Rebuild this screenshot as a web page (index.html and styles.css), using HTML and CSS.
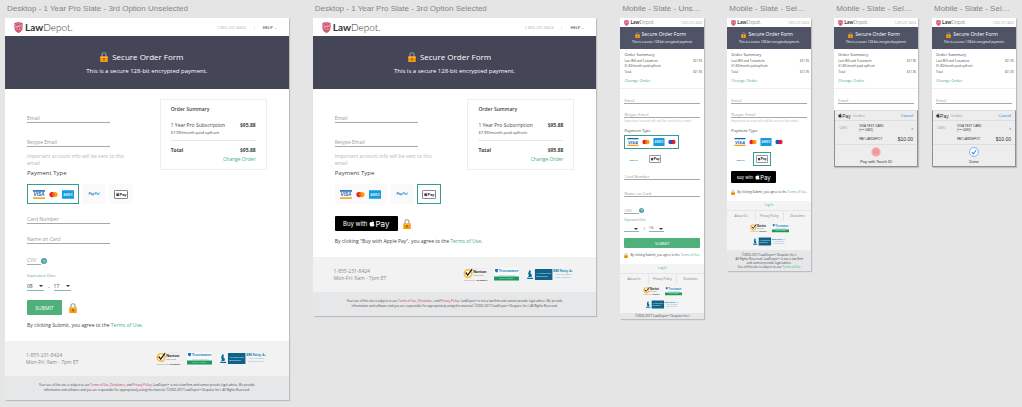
FILE: index.html
```html
<!DOCTYPE html>
<html lang="en">
<head>
    <meta charset="UTF-8">
    <meta name="viewport" content="width=device-width, initial-scale=1.0">
    <title>LawDepot - Secure Order Form</title>
    <link rel="stylesheet" href="styles.css">
</head>
<body>
    <!-- Shared icons -->
    <svg class="sprite" aria-hidden="true">
        <symbol id="shield" viewBox="0 0 18 22">
            <path d="M1 2 Q9 -1 17 2 V12 Q17 18 9 22 Q1 18 1 12 Z" fill="#c8375a"/>
            <path d="M3 4 Q9 1.500 15 4 V12 Q15 16.500 9 19.500 Q3 16.500 3 12 Z" fill="none" stroke="#f0b8c6" stroke-width="1"/>
            <path d="M6 5 L6 14 M6 14 Q9 17 13 14 M9 5 Q14 6 12 11 M8 8 L12 14 M4 10 L14 7" fill="none" stroke="#fff" stroke-width="1"/>
        </symbol>
        <symbol id="lock" viewBox="0 0 16 20">
            <path d="M4 10 V5.500 Q4 1.500 8 1.500 Q12 1.500 12 5.500 V10" fill="none" stroke="#8d9c9f" stroke-width="2.200"/>
            <rect x="0.500" y="9" width="15" height="11" rx="1" fill="#f79a0c"/>
            <path d="M0.500 9 H15.500 V12 H0.500 Z" fill="#ffb02e"/>
            <circle cx="8" cy="13.500" r="1.700" fill="#8a5200"/>
            <path d="M7.300 14 H8.700 V17.500 H7.300 Z" fill="#8a5200"/>
        </symbol>
        <symbol id="visa" viewBox="0 0 36 26">
            <path d="M0 0 H36 V5 H0 Z" fill="#1565b5"/>
            <path d="M0 21 H36 V26 H0 Z" fill="#f5a11c"/>
            <path d="M0 5 H36 V21 H0 Z" fill="#fff"/>
            <text x="18" y="19" text-anchor="middle" font-family="Liberation Sans, sans-serif" font-size="14" font-weight="bold" font-style="italic" fill="#1565b5">VISA</text>
        </symbol>
        <symbol id="mastercard" viewBox="0 0 24 18">
            <circle cx="8" cy="9" r="7" fill="#ea1d25"/>
            <circle cx="16" cy="9" r="7" fill="#f79e1b"/>
            <path d="M12 3.300 A7 7 0 0 1 12 14.700 A7 7 0 0 1 12 3.300 Z" fill="#ff5f00"/>
        </symbol>
        <symbol id="maestro" viewBox="0 0 24 18">
            <circle cx="8" cy="9" r="7" fill="#1a52c4"/>
            <circle cx="16" cy="9" r="7" fill="#e5202c"/>
            <path d="M12 3.300 A7 7 0 0 1 12 14.700 A7 7 0 0 1 12 3.300 Z" fill="#7a2f86"/>
        </symbol>
        <symbol id="amex" viewBox="0 0 36 26">
            <rect width="36" height="26" rx="1" fill="#179be0"/>
            <text x="18" y="17" text-anchor="middle" font-family="Liberation Sans, sans-serif" font-size="10" font-weight="bold" fill="#d5effc">AMEX</text>
        </symbol>
        <symbol id="paypal" viewBox="0 0 36 12">
            <text x="18" y="10" text-anchor="middle" font-family="Liberation Sans, sans-serif" font-size="10" font-weight="bold" font-style="italic" fill="#169bd7"><tspan fill="#1b6fbc">Pay</tspan>Pal</text>
        </symbol>
        <symbol id="apple" viewBox="0 0 20 24">
            <path d="M13.500 1 Q13.500 5 10 5.800 Q10 2 13.500 1 Z M10 7.500 Q12 6 14.500 6.200 Q17 6.400 18 8.200 Q15.500 10 15.700 12.500 Q16 15.500 18.700 16.600 Q17.500 20 15.300 21.800 Q14 22.800 12.200 22 Q10.200 21.200 8.300 22 Q6.500 23 5 21.500 Q1.500 18 1.500 12.500 Q2 7.200 6 6.500 Q8 6.400 10 7.500 Z" fill="currentColor"/>
        </symbol>
        <symbol id="applepay" viewBox="0 0 40 26">
            <rect x="1" y="1" width="38" height="24" rx="3" fill="#fff" stroke="#222" stroke-width="1.800"/>
            <use href="#apple" x="5" y="6" width="11" height="13"/>
            <text x="16" y="18" font-family="Liberation Sans, sans-serif" font-size="11" font-weight="bold" fill="#111">Pay</text>
        </symbol>
        <symbol id="norton" viewBox="0 0 74 38">
            <circle cx="15" cy="16" r="11" fill="#fff" stroke="#fdbb30" stroke-width="5"/>
            <path d="M8 13 L14 21 L27 3" fill="none" stroke="#222" stroke-width="4"/>
            <rect x="28" y="2" width="44" height="1" fill="#d5d5d5"/>
            <text x="30" y="15" font-family="Liberation Sans, sans-serif" font-size="12" font-weight="bold" fill="#222">Norton</text>
            <text x="31" y="24" font-family="Liberation Sans, sans-serif" font-size="6" fill="#888">SECURED</text>
            <text x="2" y="37" font-family="Liberation Sans, sans-serif" font-size="7" fill="#888">powered by <tspan font-weight="bold" fill="#444">Symantec</tspan></text>
        </symbol>
        <symbol id="truste" viewBox="0 0 74 38">
            <rect width="74" height="25" fill="#f7fafc"/>
            <path d="M3 3 H12 V7 Q12 11 8 13 Q3 11 3 7 Z" fill="#1b75bb"/>
            <text x="14" y="13" font-family="Liberation Sans, sans-serif" font-size="12" font-weight="bold" fill="#2a86bb">Trustwave</text>
            <text x="14" y="22" font-family="Liberation Sans, sans-serif" font-size="6" fill="#82b79a">Trusted Commerce</text>
            <rect y="25" width="74" height="12" rx="1" fill="#1d9a5f"/>
            <text x="37" y="33" text-anchor="middle" font-family="Liberation Sans, sans-serif" font-size="6" fill="#c5ecd7">Click to Validate</text>
        </symbol>
        <symbol id="bbb" viewBox="0 0 148 34">
            <path d="M0 1 H27 V33 H0 Z" fill="#eef4f7"/>
            <path d="M13 2 Q19 8 15 13 Q22 18 18 25 H8 Q12 20 8 15 Q8 10 13 2 Z M5 27 H23 V31 H5 Z" fill="#0f6a92"/>
            <rect x="29" y="0" width="54" height="34" rx="1" fill="#0f6288"/>
            <text x="33" y="15" font-family="Liberation Sans, sans-serif" font-size="7" font-weight="bold" fill="#b6d9e8">ACCREDITED</text>
            <text x="33" y="25" font-family="Liberation Sans, sans-serif" font-size="7" font-weight="bold" fill="#b6d9e8">BUSINESS</text>
            <text x="86" y="9" font-family="Liberation Sans, sans-serif" font-size="8" font-weight="bold" fill="#1382ad">BBB Rating: A+</text>
            <text x="92" y="19" font-family="Liberation Sans, sans-serif" font-size="7" fill="#58a6c4">As of 6/14/2017</text>
            <text x="92" y="29" font-family="Liberation Sans, sans-serif" font-size="7" fill="#58a6c4">Click for Profile</text>
        </symbol>
        <symbol id="help" viewBox="0 0 18 18">
            <circle cx="9" cy="9" r="9" fill="#4f9ea2"/>
            <text x="9" y="14" text-anchor="middle" font-family="Liberation Sans, sans-serif" font-size="13" font-weight="bold" fill="#d8eeee">?</text>
        </symbol>
    </svg>

    <div class="canvas">
        <section class="artboard desktop">
            <h2 class="artboard-name">Desktop - 1 Year Pro Slate - 3rd Option Unselected</h2>
            <div class="page">
                <header class="topbar">
                    <div class="logo"><svg class="shield"><use href="#shield"/></svg><b>Law</b>Depot.</div>
                    <div class="contact"><span class="phone">1-855-231-8424</span><button class="help-btn">HELP <span class="caret">⌄</span></button></div>
                </header>
                <div class="hero">
                    <h1><svg class="lock"><use href="#lock"/></svg>Secure Order Form</h1>
                    <p>This is a secure 128-bit encrypted payment.</p>
                </div>
                <main class="content">
                    <form class="order-form">
                        <input class="field" type="email" placeholder="Email" aria-label="Email">
                        <input class="field retype" type="email" placeholder="Retype Email" aria-label="Retype Email">
                        <p class="note">Important account info will be sent to this email</p>
                        <h3 class="payment-title">Payment Type</h3>
                        <div class="options">
                            <label class="option cards"><input type="radio" name="pay1" aria-label="Credit card" checked><svg class="card"><use href="#visa"/></svg><svg class="mc"><use href="#mastercard"/></svg><svg class="card"><use href="#amex"/></svg></label>
                            <label class="option"><input type="radio" name="pay1" aria-label="PayPal"><svg class="paypal"><use href="#paypal"/></svg></label>
                            <label class="option"><input type="radio" name="pay1" aria-label="Apple Pay"><svg class="applepay"><use href="#applepay"/></svg></label>
                        </div>
                        <input class="field card-number" type="text" placeholder="Card Number" aria-label="Card Number">
                        <input class="field card-name" type="text" placeholder="Name on Card" aria-label="Name on Card">
                        <div class="cvv-row"><input class="field cvv" type="text" placeholder="CVV" aria-label="CVV"><svg class="help"><use href="#help"/></svg></div>
                        <div class="exp-label">Expiration Date</div>
                        <div class="exp-row">
                            <div class="select-wrap"><select class="select" aria-label="Expiration month"><option>08</option></select></div>
                            <span>-</span>
                            <div class="select-wrap"><select class="select" aria-label="Expiration year"><option>17</option></select></div>
                        </div>
                        <div class="submit-row"><button class="submit" type="button">SUBMIT</button><svg class="lock"><use href="#lock"/></svg></div>
                        <p class="agree">By clicking Submit, you agree to the <a href="#">Terms of Use</a>.</p>
                    </form>
                    <aside class="summary">
                        <h3>Order Summary</h3>
                        <div class="line item"><span>1 Year Pro Subscription</span><b>$95.88</b></div>
                        <p class="small">$7.99/month paid upfront</p>
                        <div class="line total"><b>Total</b><b>$95.88</b></div>
                        <a class="change" href="#">Change Order</a>
                    </aside>
                </main>
                <footer class="footer">
                    <p>1-855-231-8424<br>Mon-Fri: 9am - 7pm ET</p>
                    <div class="badges"><svg class="norton"><use href="#norton"/></svg><svg class="truste"><use href="#truste"/></svg><svg class="bbb"><use href="#bbb"/></svg></div>
                </footer>
                <p class="legal">Your use of this site is subject to our <a href="#">Terms of Use, Disclaimer</a>, and <a href="#">Privacy Policy</a>. LawDepot™ is not a law firm and cannot provide legal advice. We provide<br>information and software and you are responsible for appropriately using this material. ©2002-2017 LawDepot™ (Sequiter Inc.). All Rights Reserved.</p>
            </div>
        </section>

        <section class="artboard desktop">
            <h2 class="artboard-name">Desktop - 1 Year Pro Slate - 3rd Option Selected</h2>
            <div class="page">
                <header class="topbar">
                    <div class="logo"><svg class="shield"><use href="#shield"/></svg><b>Law</b>Depot.</div>
                    <div class="contact"><span class="phone">1-855-231-8424</span><button class="help-btn">HELP <span class="caret">⌄</span></button></div>
                </header>
                <div class="hero">
                    <h1><svg class="lock"><use href="#lock"/></svg>Secure Order Form</h1>
                    <p>This is a secure 128-bit encrypted payment.</p>
                </div>
                <main class="content">
                    <form class="order-form">
                        <input class="field" type="email" placeholder="Email" aria-label="Email">
                        <input class="field retype" type="email" placeholder="Retype Email" aria-label="Retype Email">
                        <p class="note">Important account info will be sent to this email</p>
                        <h3 class="payment-title">Payment Type</h3>
                        <div class="options">
                            <label class="option cards"><input type="radio" name="pay2" aria-label="Credit card"><svg class="card"><use href="#visa"/></svg><svg class="mc"><use href="#mastercard"/></svg><svg class="card"><use href="#amex"/></svg></label>
                            <label class="option"><input type="radio" name="pay2" aria-label="PayPal"><svg class="paypal"><use href="#paypal"/></svg></label>
                            <label class="option"><input type="radio" name="pay2" aria-label="Apple Pay" checked><svg class="applepay"><use href="#applepay"/></svg></label>
                        </div>
                        <div class="buy-row"><button class="buy" type="button">Buy with <svg class="apple"><use href="#apple"/></svg><span>Pay</span></button><svg class="lock"><use href="#lock"/></svg></div>
                        <p class="agree">By clicking "Buy with Apple Pay", you agree to the <a href="#">Terms of Use</a>.</p>
                    </form>
                    <aside class="summary">
                        <h3>Order Summary</h3>
                        <div class="line item"><span>1 Year Pro Subscription</span><b>$95.88</b></div>
                        <p class="small">$7.99/month paid upfront</p>
                        <div class="line total"><b>Total</b><b>$95.88</b></div>
                        <a class="change" href="#">Change Order</a>
                    </aside>
                </main>
                <footer class="footer">
                    <p>1-855-231-8424<br>Mon-Fri: 9am - 7pm ET</p>
                    <div class="badges"><svg class="norton"><use href="#norton"/></svg><svg class="truste"><use href="#truste"/></svg><svg class="bbb"><use href="#bbb"/></svg></div>
                </footer>
                <p class="legal">Your use of this site is subject to our <a href="#">Terms of Use, Disclaimer</a>, and <a href="#">Privacy Policy</a>. LawDepot™ is not a law firm and cannot provide legal advice. We provide<br>information and software and you are responsible for appropriately using this material. ©2002-2017 LawDepot™ (Sequiter Inc.). All Rights Reserved.</p>
            </div>
        </section>

        <section class="artboard mobile">
            <h2 class="artboard-name">Mobile - Slate - Unselected</h2>
            <div class="page">
                <header class="topbar">
                    <div class="logo"><svg class="shield"><use href="#shield"/></svg><b>Law</b>Depot.</div>
                    <span class="phone">1-855-231-8424</span>
                </header>
                <div class="hero">
                    <h1><svg class="lock"><use href="#lock"/></svg>Secure Order Form</h1>
                    <p>This is a secure 128-bit encrypted payment.</p>
                </div>
                <div class="m-summary">
                    <h3>Order Summary</h3>
                    <div class="line"><span>Last Will and Testament</span><span>$21.95</span></div>
                    <p class="small">$1.83/month paid upfront</p>
                    <div class="line total"><span>Total</span><span>$21.95</span></div>
                    <a class="change" href="#">Change Order</a>
                </div>
                <form class="order-form">
                    <input class="field" type="email" placeholder="Email" aria-label="Email">
                    <input class="field retype" type="email" placeholder="Retype Email" aria-label="Retype Email">
                    <p class="note">Important account info will be sent to this email</p>
                    <h3 class="payment-title">Payment Type</h3>
                    <div class="options">
                        <label class="option cards"><input type="radio" name="pay3" aria-label="Credit card" checked><svg class="card"><use href="#visa"/></svg><svg class="mc"><use href="#mastercard"/></svg><svg class="card"><use href="#amex"/></svg><svg class="mc"><use href="#maestro"/></svg></label>
                        <label class="option"><input type="radio" name="pay3" aria-label="PayPal"><svg class="paypal"><use href="#paypal"/></svg></label>
                        <label class="option"><input type="radio" name="pay3" aria-label="Apple Pay"><svg class="applepay"><use href="#applepay"/></svg></label>
                    </div>
                    <input class="field card-number" type="text" placeholder="Card Number" aria-label="Card Number">
                    <input class="field card-name" type="text" placeholder="Name on Card" aria-label="Name on Card">
                    <div class="cvv-row"><input class="field cvv" type="text" placeholder="CVV" aria-label="CVV"><svg class="help"><use href="#help"/></svg></div>
                    <div class="exp-label">Expiration Date</div>
                    <div class="exp-row">
                        <div class="select-wrap"><select class="select" aria-label="Expiration month"><option></option></select></div>
                        <span>/</span>
                        <div class="select-wrap"><select class="select" aria-label="Expiration year"><option>16</option></select></div>
                    </div>
                    <button class="submit" type="button">SUBMIT</button>
                    <p class="agree"><svg class="lock"><use href="#lock"/></svg>By clicking Submit, you agree to the <a href="#">Terms of Use</a>.</p>
                </form>
                <footer class="m-footer">
                    <a class="login" href="#">Log In</a>
                    <nav><a href="#">About Us</a><a href="#">Privacy Policy</a><a href="#">Disclaimer</a></nav>
                    <div class="badges"><svg class="norton"><use href="#norton"/></svg><svg class="truste"><use href="#truste"/></svg><svg class="bbb"><use href="#bbb"/></svg></div>
                </footer>
                <p class="legal">©2002-2017 LawDepot™ (Sequiter Inc.)</p>
            </div>
        </section>

        <section class="artboard mobile">
            <h2 class="artboard-name">Mobile - Slate - Selected</h2>
            <div class="page">
                <header class="topbar">
                    <div class="logo"><svg class="shield"><use href="#shield"/></svg><b>Law</b>Depot.</div>
                    <span class="phone">1-855-231-8424</span>
                </header>
                <div class="hero">
                    <h1><svg class="lock"><use href="#lock"/></svg>Secure Order Form</h1>
                    <p>This is a secure 128-bit encrypted payment.</p>
                </div>
                <div class="m-summary">
                    <h3>Order Summary</h3>
                    <div class="line"><span>Last Will and Testament</span><span>$21.95</span></div>
                    <p class="small">$1.83/month paid upfront</p>
                    <div class="line total"><span>Total</span><span>$21.95</span></div>
                    <a class="change" href="#">Change Order</a>
                </div>
                <form class="order-form">
                    <input class="field" type="email" placeholder="Email" aria-label="Email">
                    <input class="field retype" type="email" placeholder="Retype Email" aria-label="Retype Email">
                    <p class="note">Important account info will be sent to this email</p>
                    <h3 class="payment-title">Payment Type</h3>
                    <div class="options">
                        <label class="option cards"><input type="radio" name="pay4" aria-label="Credit card"><svg class="card"><use href="#visa"/></svg><svg class="mc"><use href="#mastercard"/></svg><svg class="card"><use href="#amex"/></svg><svg class="mc"><use href="#maestro"/></svg></label>
                        <label class="option"><input type="radio" name="pay4" aria-label="PayPal"><svg class="paypal"><use href="#paypal"/></svg></label>
                        <label class="option"><input type="radio" name="pay4" aria-label="Apple Pay" checked><svg class="applepay"><use href="#applepay"/></svg></label>
                    </div>
                    <button class="buy" type="button">Buy with <svg class="apple"><use href="#apple"/></svg><span>Pay</span></button>
                    <p class="agree"><svg class="lock"><use href="#lock"/></svg>By clicking Submit, you agree to the <a href="#">Terms of Use</a>.</p>
                </form>
                <footer class="m-footer">
                    <a class="login" href="#">Log In</a>
                    <nav><a href="#">About Us</a><a href="#">Privacy Policy</a><a href="#">Disclaimer</a></nav>
                    <div class="badges"><svg class="norton"><use href="#norton"/></svg><svg class="truste"><use href="#truste"/></svg><svg class="bbb"><use href="#bbb"/></svg></div>
                </footer>
                <p class="legal">©2002-2017 LawDepot™ (Sequiter Inc.).<br>All Rights Reserved. LawDepot™ is not a law firm<br>and cannot provide legal advice.<span>Use of this site is subject to our <a href="#">Terms of Use</a></span></p>
            </div>
        </section>

        <section class="artboard mobile narrow-gap">
            <h2 class="artboard-name">Mobile - Slate - Selected - Touch ID</h2>
            <div class="page">
                <header class="topbar">
                    <div class="logo"><svg class="shield"><use href="#shield"/></svg><b>Law</b>Depot.</div>
                    <span class="phone">1-855-231-8424</span>
                </header>
                <div class="hero">
                    <h1><svg class="lock"><use href="#lock"/></svg>Secure Order Form</h1>
                    <p>This is a secure 128-bit encrypted payment.</p>
                </div>
                <div class="m-summary">
                    <h3>Order Summary</h3>
                    <div class="line"><span>Last Will and Testament</span><span>$21.95</span></div>
                    <p class="small">$1.83/month paid upfront</p>
                    <div class="line total"><span>Total</span><span>$21.95</span></div>
                    <a class="change" href="#">Change Order</a>
                </div>
                <form class="order-form short">
                    <input class="field" type="email" placeholder="Email" aria-label="Email">
                </form>
                <div class="sheet">
                    <div class="sheet-head"><span class="pay-mark"><svg class="apple"><use href="#apple"/></svg>Pay</span><span class="muted">Sandbox</span><button class="cancel">Cancel</button></div>
                    <div class="sheet-card"><span class="muted">CARD</span><p>VISA TEST CARD<br>(•••• 0492)</p><span class="chevron">›</span></div>
                    <div class="sheet-total"><span>PAY LAWDEPOT</span><b>$10.00</b></div>
                    <div class="sheet-action">
                        <svg class="touch" viewBox="0 0 28 28"><circle cx="14" cy="14" r="13" fill="#f6a9ae"/><path d="M7 17 Q5 7 14 6 Q23 7 21 17 M10 19 Q8 10 14 10 Q20 10 18 20 M14 13 V22" fill="none" stroke="#ee8087" stroke-width="1.500"/></svg>
                        <span>Pay with Touch ID</span>
                    </div>
                </div>
            </div>
        </section>

        <section class="artboard mobile">
            <h2 class="artboard-name">Mobile - Slate - Selected - Done</h2>
            <div class="page">
                <header class="topbar">
                    <div class="logo"><svg class="shield"><use href="#shield"/></svg><b>Law</b>Depot.</div>
                    <span class="phone">1-855-231-8424</span>
                </header>
                <div class="hero">
                    <h1><svg class="lock"><use href="#lock"/></svg>Secure Order Form</h1>
                    <p>This is a secure 128-bit encrypted payment.</p>
                </div>
                <div class="m-summary">
                    <h3>Order Summary</h3>
                    <div class="line"><span>Last Will and Testament</span><span>$21.95</span></div>
                    <p class="small">$1.83/month paid upfront</p>
                    <div class="line total"><span>Total</span><span>$21.95</span></div>
                    <a class="change" href="#">Change Order</a>
                </div>
                <form class="order-form short">
                    <input class="field" type="email" placeholder="Email" aria-label="Email">
                </form>
                <div class="sheet">
                    <div class="sheet-head"><span class="pay-mark"><svg class="apple"><use href="#apple"/></svg>Pay</span><span class="muted">Sandbox</span><button class="cancel">Cancel</button></div>
                    <div class="sheet-card"><span class="muted">CARD</span><p>VISA TEST CARD<br>(•••• 0492)</p><span class="chevron">›</span></div>
                    <div class="sheet-total"><span>PAY LAWDEPOT</span><b>$10.00</b></div>
                    <div class="sheet-action">
                        <svg class="touch" viewBox="0 0 28 28"><circle cx="14" cy="14" r="12.500" fill="#fff" stroke="#4a9af0" stroke-width="2"/><path d="M8 14 L12 19 L20 9" fill="none" stroke="#2f86ee" stroke-width="3"/></svg>
                        <span>Done</span>
                    </div>
                </div>
            </div>
        </section>
    </div>
</body>
</html>
```

FILE: styles.css
```css
* {
    box-sizing: border-box;
}

body {
    margin: 0;
    min-height: 100vh;
    background: #e5e5e5;
    color: #444;
    font-family: 'Open Sans', sans-serif;
    font-size: 5px;
}

h1, h2, h3, p {
    margin: 0;
    font-weight: normal;
}

svg {
    display: block;
    flex: none;
}

a {
    color: #3fae78;
    text-decoration: none;
}

b {
    font-weight: 600;
}

button, input, select {
    font: inherit;
    margin: 0;
    padding: 0;
    border: none;
    border-radius: 0;
    background: none;
    outline: none;
}

.sprite {
    display: none;
}

/* Artboards */
.canvas {
    display: flex;
    align-items: flex-start;
    padding: 0 6px 8px 5px;
}

.artboard {
    min-width: 0;
}

.desktop {
    flex: 284 1 0;
    margin-right: 24px;
}

.mobile {
    flex: 84 1 0;
    margin-right: 23px;
}

.narrow-gap {
    margin-right: 14px;
}

.artboard:last-child {
    margin-right: 0;
}

.artboard-name {
    height: 18px;
    padding: 0 2px;
    font-family: 'Liberation Sans', sans-serif;
    font-size: 8px;
    line-height: 18px;
    color: #858585;
    white-space: nowrap;
    overflow: hidden;
    text-overflow: ellipsis;
}

.page {
    background: #fff;
    box-shadow: 1px 1px 1px #bdbdbd;
}

/* Header */
.topbar {
    display: flex;
    align-items: center;
    justify-content: space-between;
    height: 18px;
    padding: 0 12px 0 9px;
}

.logo {
    display: flex;
    align-items: center;
    font-family: 'Lato', sans-serif;
    font-size: 10px;
    font-weight: 300;
    line-height: 12px;
    color: #333;
}

.logo b {
    font-weight: 700;
}

.shield {
    width: 9px;
    height: 11px;
    margin-right: 2px;
}

.contact {
    display: flex;
    align-items: center;
}

.phone {
    font-size: 4px;
    color: #aaa;
}

.help-btn {
    margin-left: 8px;
    padding-left: 8px;
    border-left: 1px solid #f0f0f0;
    font-size: 4px;
    font-weight: 600;
    color: #555;
}

.caret {
    color: #aaa;
}

.hero {
    padding: 14px 0;
    background: #444556;
    color: #fff;
    text-align: center;
}

.hero h1 {
    display: flex;
    align-items: center;
    justify-content: center;
    gap: 4px;
    padding-right: 10px;
    font-size: 8px;
    line-height: 13px;
}

.hero p {
    margin-top: 4px;
    font-size: 6px;
    line-height: 8px;
    white-space: nowrap;
}

.lock {
    width: 8px;
    height: 10px;
}

/* Form */
.content {
    display: flex;
    align-items: flex-start;
    justify-content: space-between;
    padding: 10px 22px 12px;
}

.order-form {
    display: flex;
    flex-direction: column;
    align-items: flex-start;
    padding-top: 15px;
}

.field {
    width: 83px;
    height: 9px;
    border-bottom: 1px solid #a8a8a8;
    font-size: 5px;
    line-height: 8px;
}

.field::placeholder {
    color: #999;
}

.retype {
    margin-top: 15px;
}

.note {
    max-width: 106px;
    margin-top: 6px;
    line-height: 7px;
    color: #b5b5b5;
}

.payment-title {
    margin-top: 3px;
    font-size: 6px;
    line-height: 7px;
}

.options {
    display: flex;
    gap: 3px;
    margin-top: 7px;
}

.option {
    display: flex;
    align-items: center;
    justify-content: center;
    position: relative;
    width: 24px;
    height: 20px;
    border: 1px solid #fafafa;
    background: #fafafa;
}

.option input {
    position: absolute;
    opacity: 0;
    width: 1px;
    height: 1px;
}

.option:has(input:checked) {
    border-color: #3a9c90;
    background: #fff;
}

.option.cards {
    gap: 4px;
    width: 52px;
}

.card {
    width: 12px;
    height: 9px;
}

.mc {
    width: 9px;
    height: 7px;
}

.paypal {
    width: 12px;
    height: 4px;
}

.applepay {
    width: 14px;
    height: 9px;
}

.card-number,
.card-name {
    margin-top: 11px;
}

.cvv-row {
    display: flex;
    align-items: center;
    margin-top: 12px;
}

.cvv {
    width: 14px;
}

.help {
    width: 6px;
    height: 6px;
}

.exp-label {
    margin-top: 8px;
    font-size: 4px;
    line-height: 6px;
    color: #5ba39b;
}

.exp-row {
    display: flex;
    align-items: center;
    gap: 4px;
    margin-top: 3px;
    line-height: 8px;
}

.select-wrap {
    display: flex;
    position: relative;
}

.select-wrap::after {
    content: '';
    position: absolute;
    top: 3px;
    right: 1px;
    border: 2px solid transparent;
    border-top-color: #333;
    border-bottom-width: 0;
}

.select {
    appearance: none;
    width: 17px;
    height: 9px;
    border-bottom: 1px solid #8fb5b0;
    color: #444;
    line-height: 8px;
}

.submit-row,
.buy-row {
    display: flex;
    align-items: center;
    margin-top: 9px;
    gap: 7px;
}

.submit {
    width: 35px;
    height: 15px;
    border-radius: 1px;
    background: #4fb07c;
    color: #fff;
    font-size: 5px;
}

.buy-row {
    margin-top: 12px;
    gap: 5px;
}

.buy {
    display: flex;
    align-items: center;
    justify-content: center;
    width: 63px;
    height: 15px;
    border-radius: 1px;
    background: #000;
    color: #fff;
    font-family: 'Inter', sans-serif;
    font-size: 6px;
}

.buy span {
    font-size: 8px;
}

.apple {
    width: 6px;
    height: 7px;
}

.buy .apple {
    margin-left: 2px;
}

.agree {
    margin-top: 6px;
    line-height: 8px;
    white-space: nowrap;
}

/* Order summary */
.summary {
    width: 107px;
    padding: 6px 10px;
    border: 1px solid #eee;
}

.desktop .order-form {
    width: 108px;
}

.summary h3 {
    font-size: 5px;
    font-weight: 600;
    line-height: 7px;
}

.line {
    display: flex;
    justify-content: space-between;
}

.summary .line {
    line-height: 8px;
}

.summary .item {
    margin-top: 8px;
}

.small {
    font-size: 4px;
    line-height: 8px;
}

.summary .total {
    margin-top: 3px;
    padding-top: 5px;
    border-top: 1px solid #e8e8e8;
}

.summary b {
    font-weight: 700;
}

.summary .change {
    display: block;
    margin-top: 1px;
    line-height: 8px;
    text-align: right;
}

/* Footer */
.footer {
    display: flex;
    align-items: center;
    justify-content: space-between;
    height: 35px;
    padding: 0 22px 0 21px;
    background: #f2f2f2;
    color: #8a8a8a;
    line-height: 7px;
}

.badges {
    display: flex;
    align-items: center;
    gap: 6px;
}

.norton,
.truste {
    width: 25px;
    height: 13px;
}

.bbb {
    width: 49px;
    height: 11px;
}

.legal {
    padding: 7px 0;
    background: #e6e7e9;
    color: #444;
    font-size: 3px;
    line-height: 5px;
    text-align: center;
    white-space: nowrap;
}

.legal a {
    color: #c02a50;
}

/* Mobile */
.mobile .topbar {
    height: 9px;
    padding: 0 2px 0 4px;
}

.mobile .logo {
    font-size: 5px;
    line-height: 7px;
}

.mobile .shield {
    width: 5px;
    height: 6px;
    margin-right: 1px;
}

.mobile .phone {
    font-size: 3px;
}

.mobile .hero {
    padding: 4px 0 5px;
    background: #505265;
}

.mobile .hero h1 {
    gap: 2px;
    padding-right: 4px;
    font-size: 5px;
    line-height: 7px;
}

.mobile .hero .lock {
    width: 5px;
    height: 6px;
}

.mobile .hero p {
    margin-top: 2px;
    font-size: 3px;
    line-height: 4px;
}

.m-summary {
    padding: 3px 2px 4px 4px;
    border-bottom: 1px solid #f0f0f0;
    font-size: 3px;
    line-height: 5px;
}

.m-summary h3 {
    margin-bottom: 1px;
    font-size: 4px;
    line-height: 6px;
}

.m-summary .small {
    font-size: 3px;
    line-height: 4px;
}

.m-summary .total {
    margin-top: 2px;
}

.m-summary .change {
    display: block;
    margin-top: 3px;
    font-size: 4px;
    line-height: 6px;
}

.mobile .order-form {
    padding: 8px 4px 5px;
}

.mobile .order-form.short {
    padding-bottom: 6px;
}

.mobile .field {
    width: 100%;
    height: 7px;
    font-size: 4px;
    line-height: 6px;
}

.mobile .retype {
    margin-top: 7px;
}

.mobile .note {
    max-width: none;
    margin-top: 1px;
    font-size: 3px;
    line-height: 4px;
}

.mobile .payment-title {
    margin-top: 4px;
    font-size: 4px;
}

.mobile .options {
    flex-wrap: wrap;
    gap: 3px 4px;
    margin-top: 1px;
}

.mobile .option {
    width: 18px;
    height: 14px;
    border-color: transparent;
    background: #fff;
}

.mobile .option:has(input:checked) {
    border-color: #3a9c90;
}

.mobile .option.cards {
    gap: 3px;
    width: 55px;
    margin-right: 10px;
}

.mobile .card {
    width: 12px;
    height: 8px;
}

.mobile .mc {
    width: 8px;
    height: 6px;
}

.mobile .paypal {
    width: 9px;
    height: 3px;
}

.mobile .applepay {
    width: 12px;
    height: 8px;
}

.mobile .card-number {
    margin-top: 7px;
}

.mobile .card-name,
.mobile .cvv-row {
    margin-top: 10px;
}

.mobile .cvv {
    width: 15px;
}

.mobile .help {
    width: 5px;
    height: 5px;
}

.mobile .exp-label {
    margin-top: 4px;
    font-size: 3px;
    line-height: 5px;
}

.mobile .exp-row {
    margin-top: 2px;
    font-size: 4px;
    line-height: 7px;
}

.mobile .select {
    width: 15px;
    height: 7px;
    line-height: 6px;
}

.mobile .submit {
    width: 100%;
    height: 10px;
    margin-top: 6px;
    font-size: 4px;
}

.mobile .buy {
    width: 45px;
    height: 12px;
    margin-top: 5px;
    font-size: 4px;
}

.mobile .buy span {
    font-size: 6px;
}

.mobile .buy .apple {
    width: 5px;
    height: 6px;
}

.mobile .agree {
    display: flex;
    align-items: center;
    margin-top: 4px;
    font-size: 3px;
    line-height: 7px;
    white-space: pre;
}

.mobile .agree .lock {
    width: 4px;
    height: 5px;
    margin-right: 2px;
}

.mobile .buy + .agree {
    margin-top: 6px;
}

.m-footer {
    padding-bottom: 4px;
    background: #f4f4f4;
    font-size: 3px;
    text-align: center;
}

.login {
    display: block;
    line-height: 9px;
}

.m-footer nav {
    display: flex;
    border-top: 1px solid #e6e6e6;
    line-height: 10px;
}

.m-footer nav a {
    flex: 1;
    color: #777;
}

.m-footer nav a + a {
    border-left: 1px solid #e6e6e6;
}

.m-footer .badges {
    flex-wrap: wrap;
    justify-content: center;
    gap: 4px 5px;
    padding: 2px 14px 0;
}

.m-footer .norton,
.m-footer .truste {
    width: 17px;
    height: 10px;
}

.m-footer .bbb {
    width: 34px;
    height: 9px;
}

.mobile .legal {
    padding: 1px 0;
    line-height: 4px;
}

.mobile .legal:has(span) {
    padding: 3px 0 2px;
}

.mobile .legal span {
    display: block;
}

.mobile .legal a {
    color: #3fae78;
}

/* Apple Pay sheet */
.sheet {
    border: 1px solid #8f8f8f;
    border-top-color: #ddd;
    background: #ededee;
    font-family: 'Liberation Sans', sans-serif;
    font-size: 3px;
    color: #333;
}

.sheet-head {
    display: flex;
    align-items: center;
    height: 10px;
    padding: 0 4px 0 3px;
    border-bottom: 1px solid #dedede;
}

.pay-mark {
    display: flex;
    align-items: center;
    font-size: 5px;
}

.sheet .apple {
    width: 4px;
    height: 5px;
}

.muted {
    margin-left: 2px;
    color: #aaa;
}

.cancel {
    margin-left: auto;
    font-size: 4px;
    color: #1a8cf0;
}

.sheet-card {
    display: flex;
    align-items: center;
    height: 13px;
    padding: 0 4px 0 2px;
}

.sheet-card .muted {
    width: 20px;
}

.sheet-card p {
    line-height: 4px;
}

.chevron {
    margin-left: auto;
    font-size: 6px;
    color: #1a8cf0;
}

.sheet-total {
    display: flex;
    align-items: center;
    height: 11px;
    padding: 0 4px 0 24px;
    border-bottom: 1px solid #dedede;
}

.sheet-total b {
    margin-left: auto;
    font-size: 5px;
    font-weight: normal;
}

.sheet-action {
    display: flex;
    flex-direction: column;
    align-items: center;
    gap: 2px;
    height: 21px;
    padding-top: 2px;
    font-size: 4px;
    line-height: 6px;
}

.touch {
    width: 10px;
    height: 10px;
}
```
